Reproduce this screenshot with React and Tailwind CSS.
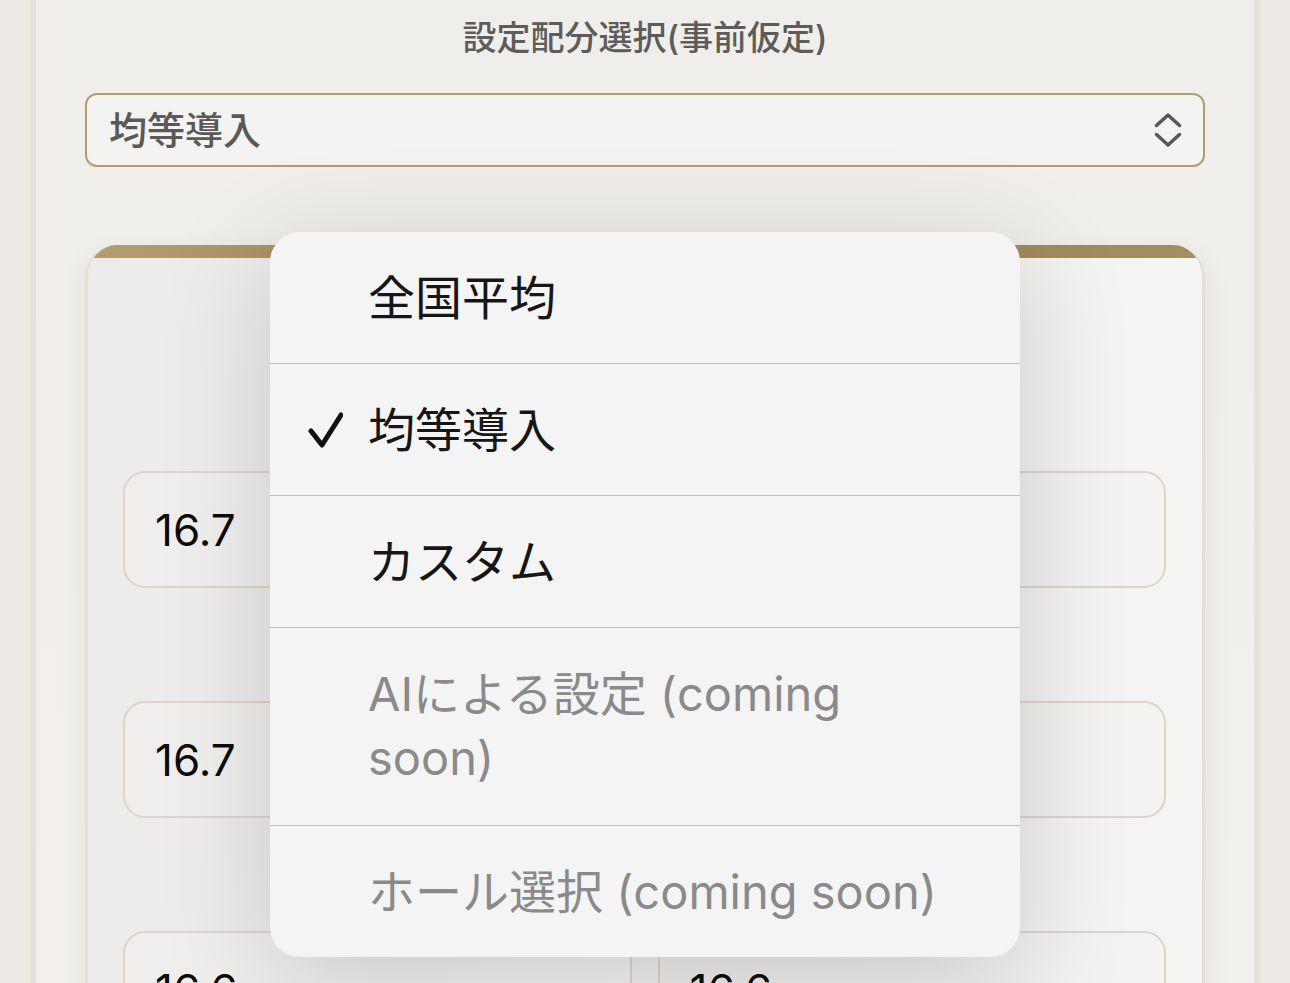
import { useState } from "react";

const options = [
  { label: "全国平均" },
  { label: "均等導入" },
  { label: "カスタム" },
  { label: ["AIによる設定 (coming", "soon)"], disabled: true },
  { label: "ホール選択 (coming soon)", disabled: true },
];

const values = ["16.7", "16.7", "16.7", "16.7", "16.6", "16.6"];

function UpDownIcon() {
  return (
    <svg width="30" height="36" viewBox="0 0 30 36" fill="none" stroke="#575755" strokeWidth="3.5" strokeLinecap="round" strokeLinejoin="round">
      <path d="M3.5 13.5 L15 3 L26.5 13.5" />
      <path d="M3.5 22.5 L15 33 L26.5 22.5" />
    </svg>
  );
}

function CheckIcon() {
  return (
    <svg width="36" height="36" viewBox="0 0 36 36" fill="none" stroke="#111" strokeWidth="5" strokeLinecap="round" strokeLinejoin="round">
      <path d="M4 19 L15 33 L34 3" />
    </svg>
  );
}

export default function App() {
  const [selected] = useState(1);

  return (
    <div className="h-[983px] overflow-hidden bg-[#eeebe6] px-[30px] font-['Inter','Noto_Sans_CJK_JP',sans-serif]">
      <div className="relative h-full border-x-[6px] border-[#e7e1d8] bg-gradient-to-b from-[#efeeeb] to-[#f1f0ed] px-[49px]">
        <h2 className="pt-[18px] text-center text-[34px] leading-[40px] font-medium text-[#5d5c5a]">
          設定配分選択(事前仮定)
        </h2>

        <div className="mt-[35px] flex h-[74px] items-center justify-between rounded-[12px] border-2 border-[#b29c72] bg-[#f3f3f2] pl-[22px] pr-[20px]">
          <span className="text-[38px] leading-none font-medium text-[#5a5957]">均等導入</span>
          <UpDownIcon />
        </div>

        <div className="mt-[78px] overflow-hidden rounded-[32px] border-x-[3px] border-[#e6dfd3] bg-gradient-to-r from-[#edecea] to-[#f4f4f3] shadow-[0_8px_30px_rgba(0,0,0,0.06)]">
          <div className="h-[13px] bg-gradient-to-r from-[#b49d6e] via-[#9a8151] to-[#a68e60]" />
          <div className="grid grid-cols-2 gap-x-[26px] gap-y-[113px] pt-[213px] pl-[35px] pr-[36px] pb-[40px]">
            {values.map((v, i) => (
              <div key={i} className="flex h-[117px] items-center rounded-[22px] border-2 border-[#ddd5c7] bg-gradient-to-r from-[#efeeec] to-[#f3f3f2] px-[30px]">
                <span className="text-[44px] leading-none text-[#0c0c0c]">{v}</span>
              </div>
            ))}
          </div>
        </div>

        <div className="absolute left-[234px] top-[232px] w-[750px] overflow-hidden rounded-[30px] bg-[#f4f4f4] shadow-[0_24px_110px_rgba(0,0,0,0.17)]">
          {options.map((o, i) => (
            <div
              key={i}
              className={`flex items-center ${i > 0 ? "border-t border-[#bdbdbd]" : ""} ${Array.isArray(o.label) ? "pt-[34px] pb-[35px]" : "pt-[34px] pb-[33px]"}`}
            >
              <div className="flex w-[98px] shrink-0 pl-[37px]">{selected === i && <CheckIcon />}</div>
              <div className={`text-[47px] leading-[64px] ${o.disabled ? "text-[#8a8a8a]" : "text-[#161616]"}`}>
                {Array.isArray(o.label) ? (
                  <>
                    {o.label[0]}
                    <br />
                    {o.label[1]}
                  </>
                ) : (
                  o.label
                )}
              </div>
            </div>
          ))}
        </div>
      </div>
    </div>
  );
}
